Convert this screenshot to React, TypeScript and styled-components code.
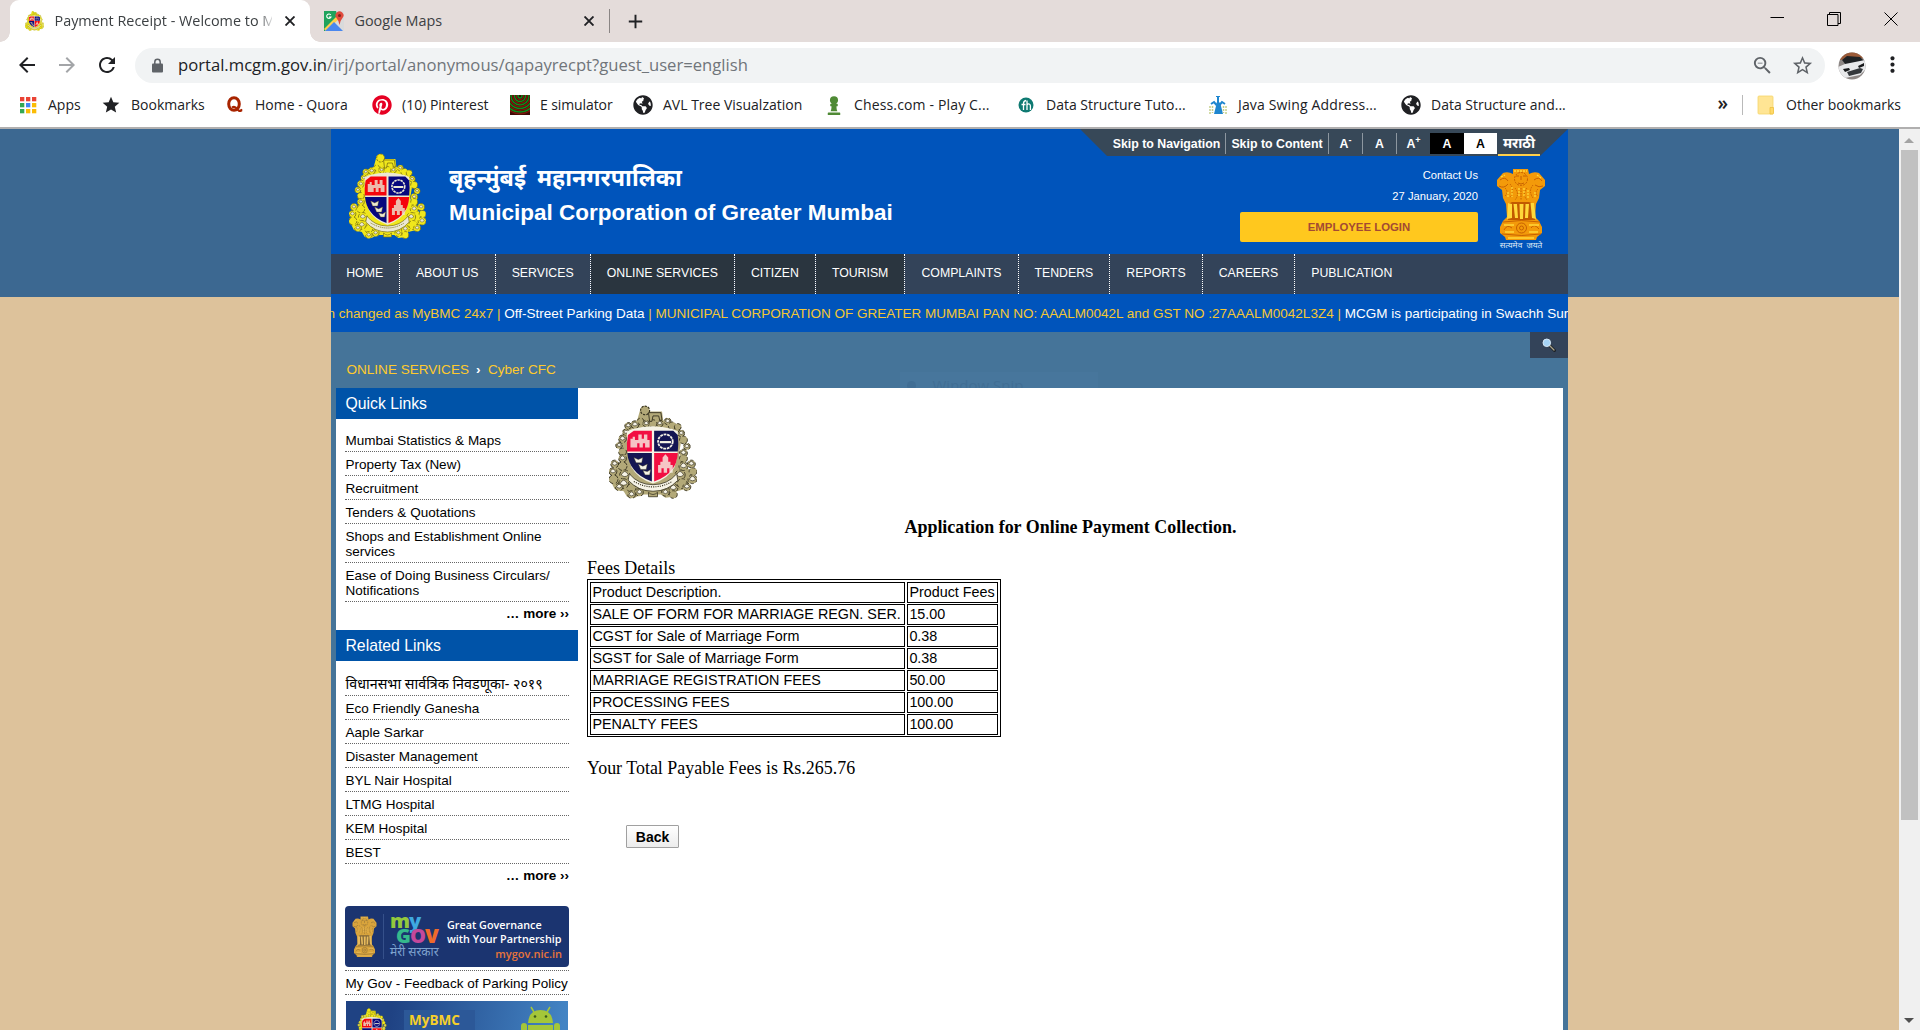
import React from "react";
import styled, { createGlobalStyle, css } from "styled-components";
import {
  MdAdd,
  MdArrowBack,
  MdArrowForward,
  MdMoreVert,
  MdRefresh,
  MdStar,
  MdStarBorder,
  MdZoomOut,
} from "react-icons/md";
import { FaChessPawn, FaGlobeAmericas, FaPinterest } from "react-icons/fa";

const UI_FONT = '"Open Sans", "Noto Sans", sans-serif';
const SANS = '"Liberation Sans", Arial, "Noto Sans", sans-serif';
const SERIF = '"Liberation Serif", "Times New Roman", serif';

const GlobalStyle = createGlobalStyle`
  * { box-sizing: border-box; }
  html, body { margin: 0; padding: 0; }
  body { overflow: hidden; background: #fff; }
`;

const Window = styled.div`
  display: flex;
  flex-direction: column;
  width: 1920px;
  height: 1030px;
  overflow: hidden;
  font-family: ${SANS};
`;

/* ---------- Browser chrome ---------- */

const TabStrip = styled.div`
  display: flex;
  align-items: stretch;
  height: 42px;
  flex: none;
  padding-left: 10px;
  background: #e4dcda;
  font-family: ${UI_FONT};
  font-size: 14.4px;
  color: #3c4043;
`;

const Tab = styled.div<{ $active?: boolean }>`
  position: relative;
  display: flex;
  align-items: center;
  width: ${(p) => (p.$active ? 300 : 299)}px;
  padding: 0 12px 1px ${(p) => (p.$active ? 15 : 14)}px;
  gap: 10.5px;
  ${(p) =>
    p.$active &&
    css`
      background: #fff;
      border-radius: 9px 9px 0 0;
      &::before,
      &::after {
        content: "";
        position: absolute;
        bottom: 0;
        width: 10px;
        height: 10px;
      }
      &::before {
        left: -10px;
        background: radial-gradient(circle at 0 0, transparent 9.5px, #fff 10px);
      }
      &::after {
        right: -10px;
        background: radial-gradient(circle at 100% 0, transparent 9.5px, #fff 10px);
      }
    `}
`;

const TabTitle = styled.span<{ $fade?: boolean }>`
  flex: 1;
  overflow: hidden;
  white-space: nowrap;
  ${(p) =>
    p.$fade &&
    css`
      mask-image: linear-gradient(90deg, #000 203px, transparent 220px);
    `}
`;

const CloseGlyph = styled.svg`
  flex: none;
  width: 16px;
  height: 16px;
  padding: 3px;
  stroke: #202124;
  stroke-width: 1.9;
`;

const TabDivider = styled.div`
  align-self: center;
  width: 1px;
  height: 24px;
  background: #8a8584;
`;

const NewTab = styled(MdAdd)`
  align-self: center;
  margin-left: 14px;
  width: 23px;
  height: 23px;
  color: #202124;
`;

const WindowControls = styled.div`
  display: flex;
  gap: 43px;
  margin-left: auto;
  padding: 12px 22px 0 0;
  svg {
    width: 14px;
    height: 14px;
    fill: none;
    stroke: #000;
    stroke-width: 1;
  }
`;

const Toolbar = styled.div`
  display: flex;
  align-items: center;
  flex: none;
  height: 45px;
  padding: 0 15px 0 15px;
  background: #fff;
`;

const ToolButton = styled.span<{ $dim?: boolean }>`
  display: flex;
  width: 24px;
  height: 24px;
  margin-right: 16px;
  color: ${(p) => (p.$dim ? "#a3a5a8" : "#202124")};
  svg {
    width: 24px;
    height: 24px;
  }
`;

const Omnibox = styled.div`
  display: flex;
  align-items: center;
  width: 1690px;
  height: 35px;
  margin-top: 1px;
  padding: 0 11px 0 17px;
  border-radius: 18px;
  background: #f1f3f4;
  color: #5f6368;
`;

const Url = styled.span`
  flex: 1;
  margin-left: 15px;
  padding-bottom: 2px;
  font-family: ${UI_FONT};
  font-size: 16.65px;
  color: #70757a;
  b {
    font-weight: 400;
    color: #202124;
  }
`;

const OmniIcons = styled.div`
  display: flex;
  gap: 17px;
  svg {
    width: 23px;
    height: 23px;
  }
`;

const Avatar = styled.svg`
  width: 28px;
  height: 28px;
  margin: 2px 14px 0 13px;
`;

const MenuDots = styled(MdMoreVert)`
  flex: none;
  width: 25px;
  height: 25px;
  color: #202124;
`;

const BookmarkBar = styled.div`
  display: flex;
  align-items: center;
  flex: none;
  height: 42px;
  padding: 0 18px 5px 18px;
  border-bottom: 2px solid #b0afaf;
  background: #fff;
  font-family: ${UI_FONT};
  font-size: 14px;
  color: #202124;
`;

const Bookmark = styled.div<{ $w: number; $track?: number }>`
  display: flex;
  align-items: center;
  flex: none;
  gap: 10px;
  width: ${(p) => p.$w}px;
  letter-spacing: ${(p) => p.$track ?? 0}px;
  white-space: nowrap;
  svg {
    flex: none;
    width: 20px;
    height: 20px;
  }
`;

const BookmarkOverflow = styled.div`
  margin-left: auto;
  padding-right: 14px;
  font-size: 19px;
  font-weight: 600;
  line-height: 20px;
  padding-bottom: 4px;
`;

const BarDivider = styled.div`
  width: 1px;
  height: 20px;
  margin-right: 13px;
  background: #b9b9b9;
`;

/* ---------- Page ---------- */

const Viewport = styled.div`
  display: flex;
  flex: 1;
  min-height: 0;
  background: #f0f0f0;
`;

const PageBody = styled.div`
  display: flex;
  width: 1899px;
  padding-left: 331px;
  background: linear-gradient(#3c6891 168px, #ddc29b 168px);
`;

const Site = styled.div`
  display: flex;
  flex-direction: column;
  width: 1237px;
  background: #457499;
`;

const Scrollbar = styled.div`
  display: flex;
  flex-direction: column;
  align-items: center;
  width: 21px;
  padding-right: 1px;
`;

const ScrollArrow = styled.svg<{ $down?: boolean }>`
  width: 10px;
  height: 5px;
  margin: ${(p) => (p.$down ? "auto 0 7px" : "9px 0 7px")};
  fill: ${(p) => (p.$down ? "#505050" : "#a3a3a3")};
`;

const ScrollThumb = styled.div`
  width: 17px;
  height: 670px;
  background: #c1c1c1;
`;

const Header = styled.header`
  display: flex;
  flex: none;
  height: 125px;
  background: #0054bb;
  color: #fff;
`;

const Brand = styled.div`
  display: flex;
  gap: 23px;
  padding: 24px 0 0 18px;
`;

const BrandText = styled.div`
  display: flex;
  flex-direction: column;
  padding-top: 7px;
`;

const MarathiTitle = styled.div`
  font: bold 23.2px/34px "Noto Sans", sans-serif;
  word-spacing: 5px;
`;

const EnglishTitle = styled.div`
  font: bold 22.5px/30px ${SANS};
  padding-top: 4px;
`;

const HeaderRight = styled.div`
  display: flex;
  flex-direction: column;
  align-items: flex-end;
  margin-left: auto;
`;

const UtilityBar = styled.div`
  display: flex;
  align-items: stretch;
  width: 488px;
  height: 27px;
  padding: 4px 28px 0 27px;
  justify-content: flex-end;
  background: #374858;
  clip-path: polygon(0 0, 100% 0, 460px 100%, 27px 100%);
  font: bold 12.35px/18px ${SANS};
`;

const UtilityLink = styled.span<{ $w: number; $line?: boolean; $bg?: string; $fg?: string }>`
  width: ${(p) => p.$w}px;
  height: 21px;
  padding-top: 2px;
  text-align: center;
  white-space: nowrap;
  border-right: ${(p) => (p.$line ? "1px solid #8d97a0" : "0")};
  background: ${(p) => p.$bg ?? "transparent"};
  color: ${(p) => p.$fg ?? "#fff"};
  sup {
    font-size: 9px;
    line-height: 0;
    vertical-align: 5px;
  }
`;

const MarathiLink = styled.span`
  width: 42px;
  height: 23px;
  margin-left: 1px;
  border-bottom: 2px solid #ffd04a;
  font: bold 14px/20px "Noto Sans", sans-serif;
  text-align: center;
`;

const HeaderInfo = styled.div`
  display: flex;
  gap: 18px;
  padding: 9px 22px 0 0;
`;

const ContactColumn = styled.div`
  display: flex;
  flex-direction: column;
  align-items: flex-end;
  font-size: 11.2px;
  line-height: 21px;
`;

const LoginButton = styled.button`
  width: 238px;
  height: 30px;
  margin-top: 5px;
  padding: 0 0 1px;
  border: 0;
  border-radius: 2px;
  background: #ffc81e;
  color: #a34a33;
  font: bold 11.4px ${SANS};
`;

const StateEmblem = styled.div`
  display: flex;
  flex-direction: column;
  align-items: center;
  width: 50px;
  padding-top: 3px;
  font: 8.4px/10px "Noto Sans", sans-serif;
  word-spacing: 2px;
  white-space: nowrap;
  color: #dfe8f5;
`;

const NavBar = styled.nav`
  display: flex;
  flex: none;
  height: 40px;
  background: #334359;
`;

const NavItem = styled.a<{ $dark?: boolean; $last?: boolean }>`
  padding: 0 16.1px 0 16px;
  &:first-child {
    padding: 0 15.8px 0 15.2px;
  }
  border-right: ${(p) => (p.$last ? "0" : "1px dotted #fff")};
  background: ${(p) => (p.$dark ? "#2a353f" : "transparent")};
  background-clip: padding-box;
  color: #fff;
  font-size: 12.3px;
  line-height: 38px;
  white-space: nowrap;
`;

const Ticker = styled.div`
  flex: none;
  height: 38px;
  overflow: hidden;
  background: #0054bb;
  color: #f4c733;
  font-size: 13.5px;
  line-height: 39px;
  white-space: nowrap;
  span {
    display: inline-block;
    margin-left: -3.5px;
  }
  em {
    font-style: normal;
    color: #fff;
  }
`;

const SubBar = styled.div`
  display: flex;
  justify-content: space-between;
  flex: none;
  height: 56px;
  padding-left: 15.5px;
`;

const Breadcrumb = styled.div`
  width: 553px;
  padding-top: 28px;
  color: #ffca2d;
  font-size: 13.55px;
  line-height: 19px;
  b {
    margin: 0 7.5px 0 7px;
    color: #fff;
  }
`;

const GhostTip = styled.div`
  display: flex;
  align-items: flex-start;
  gap: 17px;
  width: 198px;
  height: 16px;
  margin: 40px auto 0 0;
  padding-left: 7px;
  background: #47769c;
  color: #416e94;
  overflow: hidden;
  font: 15px/26px ${UI_FONT};
  &::before {
    content: "";
    width: 9px;
    height: 9px;
    margin-top: 9px;
    border-radius: 50%;
    background: #416e94;
  }
`;

const SearchBox = styled.div`
  display: flex;
  justify-content: center;
  align-items: center;
  width: 38px;
  height: 26px;
  background: #334359;
`;

const Columns = styled.main`
  display: flex;
  flex: 1;
  min-height: 0;
  width: 1227px;
  margin-left: 5px;
  background: #fff;
`;

const Sidebar = styled.aside`
  display: flex;
  flex-direction: column;
  width: 242px;
  height: 642px;
  overflow: hidden;
  flex: none;
`;

const PanelTitle = styled.h2`
  flex: none;
  margin: 0;
  height: 31px;
  padding-left: 9.5px;
  background: #0053a8;
  color: #fff;
  font: 15.75px/31px ${SANS};
`;

const LinkList = styled.ul<{ $top: number }>`
  flex: none;
  list-style: none;
  margin: 0;
  padding: ${(p) => p.$top}px 9px 0;
`;

const LinkItem = styled.li`
  padding: 5px 0 3px 0.6px;
  min-height: 24px;
  border-bottom: 1px dotted #666;
  color: #000;
  font-size: 13.5px;
  line-height: 15px;
`;

const DevanagariItem = styled(LinkItem)`
  height: 24px;
  padding-top: 3px;
  font-family: "Noto Sans", sans-serif;
  font-size: 14.3px;
  line-height: 18px;
  white-space: nowrap;
`;

const MoreLink = styled.div<{ $h: number }>`
  flex: none;
  height: ${(p) => p.$h}px;
  padding: 4px 9px 0 0;
  text-align: right;
  font: bold 13.5px/16px ${SANS};
  span {
    letter-spacing: 0.6px;
  }
`;

const Banners = styled.div`
  display: flex;
  flex-direction: column;
  padding: 0 9px;
`;

const GovBanner = styled.div`
  display: flex;
  flex: none;
  align-items: center;
  width: 224px;
  height: 61px;
  margin-bottom: 3px;
  padding: 0 7px;
  border-radius: 4px;
  background: #1b3470;
  color: #fff;
`;

const GovMark = styled.div`
  display: flex;
  flex: none;
  flex-direction: column;
  width: 64px;
  height: 45px;
  margin-left: 6px;
  padding-left: 6px;
  border-left: 1px solid #35508a;
`;

const GovWord = styled.div<{ $indent?: boolean }>`
  margin-left: ${(p) => (p.$indent ? 6 : 0)}px;
  font: 800 ${(p) => (p.$indent ? "20px/17px" : "20px/13px")} "Open Sans", sans-serif;
  letter-spacing: -0.9px;
`;

const Tint = styled.span<{ $c: string }>`
  color: ${(p) => p.$c};
`;

const GovSub = styled.div`
  color: #7fa3cf;
  font: 12px/15px "Noto Sans", sans-serif;
  white-space: nowrap;
`;

const GovSlogan = styled.div`
  display: flex;
  flex: 1;
  flex-direction: column;
  align-items: flex-start;
  padding-top: 6px;
  font: 600 10.8px/13.5px "Open Sans", sans-serif;
  white-space: nowrap;
  strong {
    align-self: flex-end;
    margin-top: 2px;
    color: #e8743a;
    font-weight: 600;
    font-size: 11px;
  }
`;

const RuledText = styled.div`
  flex: none;
  height: 25px;
  margin-bottom: 6px;
  padding-left: 0.6px;
  border-top: 1px dotted #666;
  border-bottom: 1px dotted #666;
  font-size: 13.5px;
  line-height: 25px;
  white-space: nowrap;
`;

const AppBanner = styled.div`
  display: flex;
  flex: none;
  width: 222px;
  height: 70px;
  margin-left: 1px;
  padding: 7px 7px 0 9px;
  background: linear-gradient(100deg, #1f4283 20%, #4384c4 95%);
`;

const AppName = styled.div`
  width: 71px;
  height: 50px;
  margin: 2px 0 0 15px;
  padding-left: 5px;
  background: #2c5898;
  color: #f6cf2a;
  font: bold 13.5px/21px "Open Sans", sans-serif;
`;

const Droid = styled.svg`
  width: 40px;
  height: 50px;
  margin: -2px 0 0 auto;
`;

const Content = styled.section`
  display: flex;
  flex-direction: column;
  align-items: flex-start;
  flex: 1;
  padding: 17px 0 0 9px;
  font: 17.95px/20px ${SERIF};
  color: #000;
`;

const CrestWrap = styled.div`
  margin-left: 22px;
  height: 111px;
`;

const FormTitle = styled.h1`
  align-self: stretch;
  margin: 0 0 21px -9px;
  padding-top: 1px;
  text-align: center;
  font: bold 17.95px/20px ${SERIF};
`;

const FeeTable = styled.div`
  display: grid;
  grid-template-columns: 315px 91px;
  grid-auto-rows: 21px;
  gap: 1px 2px;
  margin: 1px 0 21px;
  padding: 2px 2px 1px;
  border: 1px solid #000;
  font: 14.35px/18px ${SANS};
`;

const FeeCell = styled.div`
  padding-left: 1.4px;
  border: 1px solid #000;
  white-space: nowrap;
`;

const BackButton = styled.button`
  width: 53px;
  height: 23px;
  margin: 47px 0 0 39px;
  padding: 0;
  border: 1px solid #a0a0a0;
  border-radius: 1px;
  background: linear-gradient(#fff, #ececec);
  font: bold 14px ${SANS};
  color: #000;
`;

/* ---------- Drawings ---------- */

type CrestProps = {
  width: number;
  height: number;
  gold: string;
  light: string;
  line: string;
  red: string;
  navy: string;
  leaf: number;
};

/* Leaf scrolls round the shield: x, y, radius */
const SCROLLS: [number, number, number][] = [
  [28, 15, 3], [23, 18, 3.5], [52, 15, 3], [56, 19, 3.5], [33, 17, 3], [45, 17, 3], [39, 17, 3.5],
  [17, 19, 3], [15, 25, 3], [61, 20, 3], [64, 26, 3], [12, 31, 3.5], [66, 32, 3.5],
  [9, 37, 3], [69, 38, 3], [12, 43, 3.5], [66, 44, 3.5], [12, 49, 3.5], [66, 49, 3.5],
  [5, 54, 3.5], [73, 54, 3.5], [12, 56, 4], [66, 56, 4], [3.5, 61, 3.5], [74.5, 61, 3.5], [14, 64, 4.5],
  [63, 64, 4.5], [4, 68, 4], [74, 68, 4], [13, 72, 4.5], [65, 72, 4.5], [9, 75, 3.5], [69, 75, 3.5],
  [20, 76, 4], [57, 76, 4], [20, 82, 3.5], [57, 82, 3.5], [27, 80, 3.5], [50, 80, 3.5],
];

function Crest({ width, height, gold, light, line, red, navy, leaf }: CrestProps) {
  return (
    <svg width={width} height={height} viewBox="0 0 78 87" preserveAspectRatio="none">
      <path
        d="M28 3q4-4 7 0l1 3 11 0 1 8 8 3 6 6 2 10-2 12 3 8 6 6 2 10-5 8-8 2-3 5-7 1-4-3-18 0-5 3-7-1-3-5-8-2-4-8 2-10 7-7 3-7-2-12 2-10 6-6 6-3z"
        fill={gold}
      />
      <g fill={gold} stroke={line} strokeWidth="0.8">
        {SCROLLS.map(([x, y, r], i) => (
          <circle key={i} cx={x} cy={y} r={r} strokeDasharray={i % 2 ? "4 2.5" : "3 2"} />
        ))}
      </g>
      <g fill={light} stroke={line} strokeWidth="0.6">
        {SCROLLS.filter((_, i) => i % 3 !== 0).map(([x, y, r], i) => (
          <path
            key={i}
            d={`M${x - (r * leaf) / 2} ${y}q${(r * leaf) / 2} ${-r * leaf} ${r * leaf} 0q${(-r * leaf) / 2} ${(r * leaf) / 2} ${-r * leaf} 0z`}
          />
        ))}
      </g>
      <circle cx="32" cy="5" r="4" fill={gold} stroke={line} strokeDasharray="2 1" />
      <path d="M35 7h11l1 7h-2l-1-4h-5l-1 5h-2z" fill={gold} stroke={line} strokeWidth="0.8" />
      <path d="M21 22q18-5 35 0l5 2q1 22-3 33-5 10-19 15-14-5-19-15-5-12-4-33z" fill={light} />
      <path d="M22 23.500h16v19H16q-.6-8 .8-15z" fill={red} />
      <path d="M40 23.500h17l4 4q.8 7 0 15H40z" fill={navy} />
      <path d="M16.200 44H38v26q-11-4-16-11-5-6-5.800-15z" fill={navy} />
      <path d="M40 44h21q-.8 10-5 15-5 7-16 11z" fill={red} />
      <path
        d="M19 39v-8h2v-2h2v3h3v-5h3v4h2v-4h3v5h2v7h-4v-4h-2v4h-3v-4h-2v4z"
        fill={light}
        opacity="0.8"
      />
      <circle cx="50" cy="33.500" r="6.500" fill="none" stroke={light} strokeWidth="1.600" strokeDasharray="2.500 .7" />
      <path d="M45 33h10v2H45z" fill={light} />
      <path
        d="M22 48l4 2 4-2-1 5h-5zm4 6l4 2 4-2-1 5h-5zm4 6l4 1 3-2-1 5h-4z"
        fill={light}
        stroke={line}
        strokeWidth="0.4"
      />
      <path d="M47.500 48l2.500-3 2.500 3v4h2v3h2v7h-3v-4h-2v4h-3v-4h-2v4h-3v-7h2v-3h2z" fill={light} opacity="0.8" />
      <path d="M18 63q8 10 21 10t21-10l1 6q-9 10-22 10T17 69z" fill={light} stroke={line} strokeWidth="0.7" />
      <path d="M22 70q17 10 34 0" fill="none" stroke={line} strokeWidth="1" strokeDasharray="1 1" />
      <path d="M35 80q4 4 8 0v4h-8z" fill={gold} stroke={line} strokeWidth="0.7" />
    </svg>
  );
}

function LionCapital({ width, height, flat }: { width: number; height: number; flat?: boolean }) {
  const gold = flat ? "#d9a43c" : "#f39a0a";
  const light = flat ? "#e8bb5c" : "#ffd83a";
  const dark = flat ? "#7d6438" : "#c25a00";
  return (
    <svg width={width} height={height} viewBox="0 0 50 72" preserveAspectRatio="none">
      <path
        d="M17 1h15l1 5q5-3 10-1l6 7v6l-5 4-1 8-3 6-1 13 4 4 3 6v6l-5 4-1 3H10l-1-3-5-4v-6l3-6 4-4-1-13-3-6-1-8-5-4v-6l6-7q5-2 10 1z"
        fill={gold}
      />
      <path d="M12 36l4-2h17l5 2 1 16H12z" fill={dark} />
      <path
        d="M12 35l4 1v14l-5 1zM17.500 36h3.500l1 14h-3zM23.500 36h4l-.5 15h-3zM29.500 36h3.500l-1 14h-3zM34.500 35l1.500 15 4 1-2-16z"
        fill={light}
      />
      <g fill="none" stroke={dark} strokeWidth="0.9">
        <circle cx="25" cy="11" r="6.500" strokeDasharray="2 1" />
        <path d="M20 8h3m4 0h3M25 8v4m-3 3q3 2 6 0M4 12q5-4 8 1M38 12q5-4 8 1M3 18q5 3 9-2M39 17q4 3 8 1" />
        <path
          d="M9 20q4 4 0 8m5-12q5 6 0 14m5-10q5 6 0 12m6-12v12m6-12q-5 6 0 12m6-15q-5 6 0 13m5-9q-4 4 0 7"
          strokeDasharray="1.500 1"
        />
        <path d="M7 54q18-3 37 0M6 66q20 3 39 0" />
        <circle cx="25.500" cy="60" r="5" />
        <circle cx="25.500" cy="60" r="2" />
        <path d="M8 62q3-6 8-2m19 0q3-5 8 1" />
      </g>
      <g fill="none" stroke={light} strokeWidth="1.300">
        <path d="M18 3h13M5 9l4-2M41 7l4 3M12 24v6M16 19v10M23 20v9M28 20v8M32 22v8M39 24v5" strokeDasharray="2 1" />
        <path d="M8 57h10m15 0h10M9 64h9m15 0h9M12 70h26" />
      </g>
    </svg>
  );
}

const HEADER_CREST = {
  gold: "#f0e71c",
  light: "#ebe8d4",
  line: "#7a7014",
  red: "#f5050c",
  navy: "#07087e",
  leaf: 1.2,
};
const FORM_CREST = {
  gold: "#b3a978",
  light: "#f6f3e6",
  line: "#35311f",
  red: "#f20f42",
  navy: "#141553",
  leaf: 1.4,
};

function CloseIcon() {
  return (
    <CloseGlyph viewBox="0 0 10 10">
      <path d="M.5.5l9 9M9.500.5l-9 9" />
    </CloseGlyph>
  );
}

function MapsIcon() {
  return (
    <svg width="20" height="20" viewBox="0 0 20 20">
      <rect width="20" height="20" rx="1.500" fill="#d9dadb" />
      <path d="M0 0h12L14 7 1 20H0z" fill="#1fa35c" />
      <path d="M13 5L0 18l2 2L15 8z" fill="#ffd04b" />
      <path d="M10 11l9 9H1z" fill="#4a87ee" />
      <path d="M15.500 14q-.4-4-3-7a4 4 0 1 1 6 0q-2.600 3-3 7z" fill="#e14a3c" />
      <circle cx="15.500" cy="4.500" r="1.500" fill="#7d231c" />
      <path d="M6.800 4A2.200 2.200 0 1 0 7 6H5" fill="none" stroke="#fff" strokeWidth="1.100" />
    </svg>
  );
}

function LockIcon() {
  return (
    <svg width="11" height="15" viewBox="0 0 11 15">
      <path d="M2.800 7V4a2.700 2.700 0 0 1 5.400 0v3" fill="none" stroke="#5f6368" strokeWidth="1.500" />
      <rect y="5.500" width="11" height="9" rx="1" fill="#5f6368" />
    </svg>
  );
}

function AppsIcon() {
  const colours = ["#ea4335", "#ea4335", "#ea4335", "#34a853", "#4285f4", "#fbbc05", "#34a853", "#fbbc05", "#fbbc05"];
  return (
    <svg viewBox="0 0 20 20">
      {colours.map((c, i) => (
        <rect key={i} x={2 + (i % 3) * 6} y={2 + Math.floor(i / 3) * 6} width="4.300" height="4.300" fill={c} />
      ))}
    </svg>
  );
}

function QuoraIcon() {
  return (
    <svg viewBox="0 0 20 20">
      <ellipse cx="9" cy="9" rx="5.300" ry="6.300" fill="none" stroke="#a82400" strokeWidth="3" />
      <path d="M7 12.500q3-1.500 5 1.500t5 1" fill="none" stroke="#a82400" strokeWidth="2.200" />
      <path d="M13.500 15.500q2 2 3.200-1.500" fill="none" stroke="#a82400" strokeWidth="1.600" />
    </svg>
  );
}

function WavesIcon() {
  return (
    <svg viewBox="0 0 20 20">
      <rect width="20" height="20" fill="#3c0b06" />
      <g fill="none" strokeWidth="1.400">
        {[2, 5.5, 9, 12.5, 16].map((r) => (
          <g key={r}>
            <circle cx="10" cy="1" r={r} stroke="#0a8f1d" />
            <circle cx="10" cy="1" r={r + 1.7} stroke="#7d160c" />
          </g>
        ))}
      </g>
    </svg>
  );
}

function GfgIcon() {
  return (
    <svg viewBox="0 0 20 20">
      <circle cx="10" cy="10" r="7.500" fill="#0f7a72" />
      <path
        d="M7.500 15V8.500Q7.500 6 10 5.500M5.500 9.500h4M11 15V5.500M11 10q1-1.500 2.200-1t1.200 2v4"
        fill="none"
        stroke="#fff"
        strokeWidth="1.300"
      />
    </svg>
  );
}

function JavaIcon() {
  return (
    <svg viewBox="0 0 20 20">
      <path d="M8 1h4v1h-1v5q2 1 2 4l2 8H6l2-8q0-3 1-4V2H8z" fill="#1f86cf" />
      <path d="M3 9l3-2 2.500 3M17 9l-3-2-2.500 3" stroke="#1f86cf" strokeWidth="2" fill="none" />
      <path d="M2 11v8M18 11v8M4.500 11v7M15.500 11v7" stroke="#c5cf8a" strokeWidth="1.500" strokeDasharray="2 1" />
    </svg>
  );
}

function FolderIcon() {
  return (
    <svg viewBox="0 0 20 20">
      <path d="M2 2q0-1 1-1h13q1 0 1 1v17H3q-1 0-1-1z" fill="#ffe594" stroke="#f5d66b" strokeWidth="0.8" />
      <path d="M14 12.500h3.500v5.500q0 1-1 1H14z" fill="#ffd968" stroke="#edc03f" strokeWidth="0.8" />
    </svg>
  );
}

const BOOKMARKS: { label: string; w: number; track?: number; icon: React.ReactNode }[] = [
  { label: "Apps", w: 83, icon: <AppsIcon /> },
  { label: "Bookmarks", w: 124, icon: <MdStar color="#202124" /> },
  { label: "Home - Quora", w: 147, icon: <QuoraIcon /> },
  { label: "(10) Pinterest", w: 138, icon: <FaPinterest color="#e60023" /> },
  { label: "E simulator", w: 123, track: -0.1, icon: <WavesIcon /> },
  { label: "AVL Tree Visualzation", w: 191, icon: <FaGlobeAmericas color="#202124" /> },
  { label: "Chess.com - Play C...", w: 192, track: 0.15, icon: <FaChessPawn color="#4f8a35" /> },
  { label: "Data Structure Tuto...", w: 192, icon: <GfgIcon /> },
  { label: "Java Swing Address...", w: 193, track: 0.15, icon: <JavaIcon /> },
  { label: "Data Structure and...", w: 170, icon: <FaGlobeAmericas color="#202124" /> },
];

const NAV: [string, boolean][] = [
  ["HOME", false],
  ["ABOUT US", false],
  ["SERVICES", false],
  ["ONLINE SERVICES", true],
  ["CITIZEN", true],
  ["TOURISM", true],
  ["COMPLAINTS", false],
  ["TENDERS", false],
  ["REPORTS", false],
  ["CAREERS", false],
  ["PUBLICATION", false],
];

const QUICK_LINKS = [
  "Mumbai Statistics & Maps",
  "Property Tax (New)",
  "Recruitment",
  "Tenders & Quotations",
  "Shops and Establishment Online services",
  "Ease of Doing Business Circulars/ Notifications",
];

const RELATED_LINKS = [
  "Eco Friendly Ganesha",
  "Aaple Sarkar",
  "Disaster Management",
  "BYL Nair Hospital",
  "LTMG Hospital",
  "KEM Hospital",
  "BEST",
];

const FEES: [string, string][] = [
  ["Product Description.", "Product Fees"],
  ["SALE OF FORM FOR MARRIAGE REGN. SER.", "15.00"],
  ["CGST for Sale of Marriage Form", "0.38"],
  ["SGST for Sale of Marriage Form", "0.38"],
  ["MARRIAGE REGISTRATION FEES", "50.00"],
  ["PROCESSING FEES", "100.00"],
  ["PENALTY FEES", "100.00"],
];

function BrowserChrome() {
  return (
    <>
      <TabStrip>
        <Tab $active>
          <Crest width={19} height={20} {...HEADER_CREST} />
          <TabTitle $fade>Payment Receipt - Welcome to MCGM</TabTitle>
          <CloseIcon />
        </Tab>
        <Tab>
          <MapsIcon />
          <TabTitle>Google Maps</TabTitle>
          <CloseIcon />
        </Tab>
        <TabDivider />
        <NewTab />
        <WindowControls>
          <svg viewBox="0 0 14 14">
            <path d="M.5 5.500h13.500" />
          </svg>
          <svg viewBox="0 0 14 14">
            <path d="M.5 2.500h10.500v11H.5zM2.500 2.500v-2h11v11H11" />
          </svg>
          <svg viewBox="0 0 14 14">
            <path d="M.5.5l13 13M13.500.5l-13 13" />
          </svg>
        </WindowControls>
      </TabStrip>
      <Toolbar>
        <ToolButton>
          <MdArrowBack />
        </ToolButton>
        <ToolButton $dim>
          <MdArrowForward />
        </ToolButton>
        <ToolButton>
          <MdRefresh />
        </ToolButton>
        <Omnibox>
          <LockIcon />
          <Url>
            <b>portal.mcgm.gov.in</b>/irj/portal/anonymous/qapayrecpt?guest_user=english
          </Url>
          <OmniIcons>
            <MdZoomOut />
            <MdStarBorder />
          </OmniIcons>
        </Omnibox>
        <Avatar viewBox="0 0 28 28">
          <clipPath id="avatar-clip">
            <circle cx="14" cy="14" r="13.500" />
          </clipPath>
          <g clipPath="url(#avatar-clip)">
            <rect width="28" height="28" fill="#8d8785" />
            <path d="M0 0h28v6L0 8z" fill="#9a5a38" />
            <path d="M4 8l5-4 13 1 4 4-18 4z" fill="#1f2225" />
            <path d="M0 15l7-3 20-4 1 9-6 6-15 3-7-5z" fill="#e8e9eb" />
            <path d="M9 20l13-4 3 1-2 4-12 3z" fill="#34383c" />
            <path d="M5 17l6-1 1 2-5 2zM20 14l6-3v3l-5 2z" fill="#17191b" />
          </g>
        </Avatar>
        <MenuDots />
      </Toolbar>
      <BookmarkBar>
        {BOOKMARKS.map((b, i) => (
          <Bookmark key={i} $w={b.w} $track={b.track}>
            {b.icon}
            {b.label}
          </Bookmark>
        ))}
        <BookmarkOverflow>»</BookmarkOverflow>
        <BarDivider />
        <Bookmark $w={146}>
          <FolderIcon />
          Other bookmarks
        </Bookmark>
      </BookmarkBar>
    </>
  );
}

function SiteHeader() {
  return (
    <Header>
      <Brand>
        <Crest width={77} height={87} {...HEADER_CREST} />
        <BrandText>
          <MarathiTitle>बृहन्मुंबई महानगरपालिका</MarathiTitle>
          <EnglishTitle>Municipal Corporation of Greater Mumbai</EnglishTitle>
        </BrandText>
      </Brand>
      <HeaderRight>
        <UtilityBar>
          <UtilityLink $w={118} $line>
            Skip to Navigation
          </UtilityLink>
          <UtilityLink $w={103} $line>
            Skip to Content
          </UtilityLink>
          <UtilityLink $w={34} $line>
            A<sup>-</sup>
          </UtilityLink>
          <UtilityLink $w={34} $line>
            A
          </UtilityLink>
          <UtilityLink $w={33}>
            A<sup>+</sup>
          </UtilityLink>
          <UtilityLink $w={34} $bg="#000">
            A
          </UtilityLink>
          <UtilityLink $w={33} $bg="#fff" $fg="#000">
            A
          </UtilityLink>
          <MarathiLink>मराठी</MarathiLink>
        </UtilityBar>
        <HeaderInfo>
          <ContactColumn>
            <div>Contact Us</div>
            <div>27 January, 2020</div>
            <LoginButton>EMPLOYEE LOGIN</LoginButton>
          </ContactColumn>
          <StateEmblem>
            <LionCapital width={50} height={72} />
            सत्यमेव जयते
          </StateEmblem>
        </HeaderInfo>
      </HeaderRight>
    </Header>
  );
}

export default function App() {
  return (
    <Window>
      <GlobalStyle />
      <BrowserChrome />
      <Viewport>
        <PageBody>
          <Site>
            <SiteHeader />
            <NavBar>
              {NAV.map(([label, dark], i) => (
                <NavItem key={label} $dark={dark} $last={i === NAV.length - 1}>
                  {label}
                </NavItem>
              ))}
            </NavBar>
            <Ticker>
              <span>
                n changed as MyBMC 24x7 | <em>Off-Street Parking Data</em> | MUNICIPAL CORPORATION OF GREATER MUMBAI
                PAN NO: AAALM0042L and GST NO :27AAALM0042L3Z4 | <em>MCGM is participating in Swachh Survekshan</em>
              </span>
            </Ticker>
            <SubBar>
              <Breadcrumb>
                ONLINE SERVICES<b>›</b>Cyber CFC
              </Breadcrumb>
              <GhostTip>Window Snip</GhostTip>
              <SearchBox>
                <svg width="14" height="14" viewBox="0 0 14 14">
                  <path d="M7.500 7.500l5 5" stroke="#1d2227" strokeWidth="3" strokeLinecap="round" />
                  <path d="M8 8l4 4" stroke="#aaa48d" strokeWidth="1.300" strokeLinecap="round" />
                  <circle cx="4.800" cy="4.800" r="3.800" fill="#a5d4f7" stroke="#dfeefa" strokeWidth="0.900" />
                </svg>
              </SearchBox>
            </SubBar>
            <Columns>
              <Sidebar>
                <PanelTitle>Quick Links</PanelTitle>
                <LinkList $top={9}>
                  {QUICK_LINKS.map((l) => (
                    <LinkItem key={l}>{l}</LinkItem>
                  ))}
                </LinkList>
                <MoreLink $h={28}>
                  <span>...</span> more ››
                </MoreLink>
                <PanelTitle>Related Links</PanelTitle>
                <LinkList $top={11}>
                  <DevanagariItem>विधानसभा सार्वत्रिक निवडणूका- २०१९</DevanagariItem>
                  {RELATED_LINKS.map((l) => (
                    <LinkItem key={l}>{l}</LinkItem>
                  ))}
                </LinkList>
                <MoreLink $h={42}>
                  <span>...</span> more ››
                </MoreLink>
                <Banners>
                  <GovBanner>
                    <LionCapital width={25} height={41} flat />
                    <GovMark>
                      <GovWord>
                        <Tint $c="#93c83d">m</Tint>
                        <Tint $c="#3fa9e0">y</Tint>
                      </GovWord>
                      <GovWord $indent>
                        <Tint $c="#35b98c">G</Tint>
                        <Tint $c="#c3489b">O</Tint>
                        <Tint $c="#ee6a2b">V</Tint>
                      </GovWord>
                      <GovSub>मेरी सरकार</GovSub>
                    </GovMark>
                    <GovSlogan>
                      <span>Great Governance</span>
                      <span>with Your Partnership</span>
                      <strong>mygov.nic.in</strong>
                    </GovSlogan>
                  </GovBanner>
                  <RuledText>My Gov - Feedback of Parking Policy</RuledText>
                  <AppBanner>
                    <Crest width={34} height={40} {...HEADER_CREST} />
                    <AppName>MyBMC</AppName>
                    <Droid viewBox="0 0 40 50">
                      <path d="M10 1l3 5M29 1l-3 5" stroke="#a4c639" strokeWidth="1.500" />
                      <path d="M7 17Q8 4 19.500 4T32 17z" fill="#a4c639" />
                      <circle cx="14" cy="10.500" r="1.300" fill="#3a5a1c" />
                      <circle cx="25" cy="10.500" r="1.300" fill="#3a5a1c" />
                      <path d="M7 19h25v28H7z" fill="#a4c639" />
                      <rect x="0" y="17" width="6" height="24" rx="3" fill="#a4c639" />
                      <rect x="33" y="17" width="6" height="24" rx="3" fill="#a4c639" />
                    </Droid>
                  </AppBanner>
                </Banners>
              </Sidebar>
              <Content>
                <CrestWrap>
                  <Crest width={88} height={95} {...FORM_CREST} />
                </CrestWrap>
                <FormTitle>Application for Online Payment Collection.</FormTitle>
                <div>Fees Details</div>
                <FeeTable>
                  {FEES.flat().map((cell, i) => (
                    <FeeCell key={i}>{cell}</FeeCell>
                  ))}
                </FeeTable>
                <div>Your Total Payable Fees is Rs.265.76</div>
                <BackButton>Back</BackButton>
              </Content>
            </Columns>
          </Site>
        </PageBody>
        <Scrollbar>
          <ScrollArrow viewBox="0 0 10 5">
            <path d="M0 5l5-5 5 5z" />
          </ScrollArrow>
          <ScrollThumb />
          <ScrollArrow $down viewBox="0 0 10 5">
            <path d="M0 0l5 5 5-5z" />
          </ScrollArrow>
        </Scrollbar>
      </Viewport>
    </Window>
  );
}
